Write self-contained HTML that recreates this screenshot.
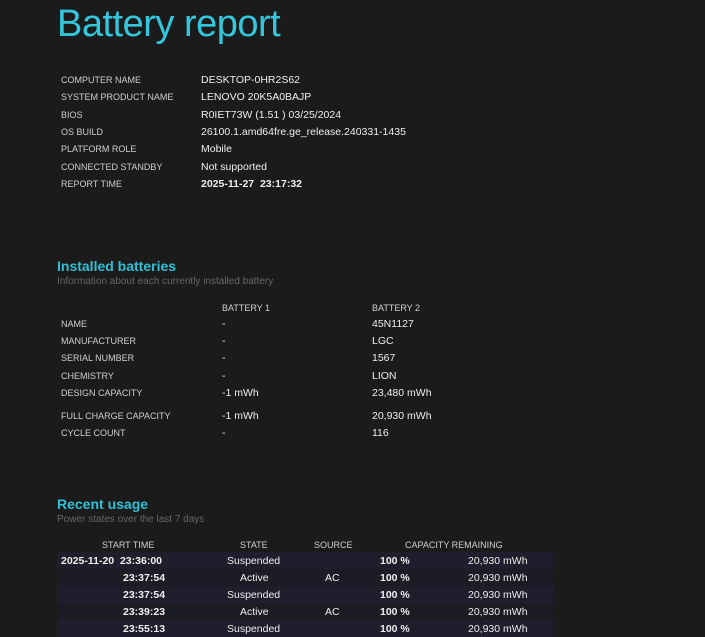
<!DOCTYPE html>
<html><head><style>
body{margin:0;background:#1b1b1b;width:705px;height:636px;overflow:hidden;font-family:"Liberation Sans",sans-serif;color:#e6e6e6;position:relative}
.a{position:absolute;white-space:nowrap;margin-top:2px}
.t{font-size:38px;color:#33c6dc;left:57px;top:-2px;letter-spacing:-0.5px;margin-top:5px}
.l{font-size:9px;color:#cfcfcf;left:61px}
.v{font-size:10.5px;color:#eee}
.h{font-size:14px;font-weight:bold;color:#2fc0d6;left:57px}
.s{font-size:10px;color:#666;left:57px}
.ch{font-size:9px;color:#cfcfcf}
.row{position:absolute;left:57px;width:496px;height:17px;margin-top:1px}
</style></head><body>
<div class="a t">Battery report</div>

<div class="a l" style="top:73px">COMPUTER NAME</div><div class="a v" style="left:201px;top:72px">DESKTOP-0HR2S62</div>
<div class="a l" style="top:90px">SYSTEM PRODUCT NAME</div><div class="a v" style="left:201px;top:89px">LENOVO 20K5A0BAJP</div>
<div class="a l" style="top:108px">BIOS</div><div class="a v" style="left:201px;top:107px">R0IET73W (1.51 ) 03/25/2024</div>
<div class="a l" style="top:125px">OS BUILD</div><div class="a v" style="left:201px;top:124px">26100.1.amd64fre.ge_release.240331-1435</div>
<div class="a l" style="top:142px">PLATFORM ROLE</div><div class="a v" style="left:201px;top:141px">Mobile</div>
<div class="a l" style="top:160px">CONNECTED STANDBY</div><div class="a v" style="left:201px;top:159px">Not supported</div>
<div class="a l" style="top:177px">REPORT TIME</div><div class="a v" style="left:201px;top:176px;font-weight:bold">2025-11-27&nbsp; 23:17:32</div>

<div class="a h" style="top:256px">Installed batteries</div>
<div class="a s" style="top:274px">Information about each currently installed battery</div>
<div class="a ch" style="left:222px;top:301px">BATTERY 1</div><div class="a ch" style="left:372px;top:301px">BATTERY 2</div>
<div class="a l" style="top:317px">NAME</div><div class="a v" style="left:222px;top:316px">-</div><div class="a v" style="left:372px;top:316px">45N1127</div>
<div class="a l" style="top:334px">MANUFACTURER</div><div class="a v" style="left:222px;top:333px">-</div><div class="a v" style="left:372px;top:333px">LGC</div>
<div class="a l" style="top:351px">SERIAL NUMBER</div><div class="a v" style="left:222px;top:350px">-</div><div class="a v" style="left:372px;top:350px">1567</div>
<div class="a l" style="top:369px">CHEMISTRY</div><div class="a v" style="left:222px;top:368px">-</div><div class="a v" style="left:372px;top:368px">LION</div>
<div class="a l" style="top:386px">DESIGN CAPACITY</div><div class="a v" style="left:222px;top:385px">-1 mWh</div><div class="a v" style="left:372px;top:385px">23,480 mWh</div>
<div class="a l" style="top:409px">FULL CHARGE CAPACITY</div><div class="a v" style="left:222px;top:408px">-1 mWh</div><div class="a v" style="left:372px;top:408px">20,930 mWh</div>
<div class="a l" style="top:426px">CYCLE COUNT</div><div class="a v" style="left:222px;top:425px">-</div><div class="a v" style="left:372px;top:425px">116</div>

<div class="a h" style="top:494px">Recent usage</div>
<div class="a s" style="top:512px">Power states over the last 7 days</div>
<div class="a ch" style="left:102px;top:538px">START TIME</div>
<div class="a ch" style="left:240px;top:538px">STATE</div>
<div class="a ch" style="left:314px;top:538px">SOURCE</div>
<div class="a ch" style="left:405px;top:538px">CAPACITY REMAINING</div>

<div class="row" style="top:551px;background:#1e1e2c"></div>
<div class="row" style="top:568px;background:#1c1c24"></div>
<div class="row" style="top:585px;background:#1e1e2c"></div>
<div class="row" style="top:602px;background:#1c1c24"></div>
<div class="row" style="top:619px;background:#1e1e2c"></div>

<div class="a v" style="left:61px;top:553px;font-weight:bold">2025-11-20&nbsp; 23:36:00</div>
<div class="a v" style="left:123px;top:570px;font-weight:bold">23:37:54</div>
<div class="a v" style="left:123px;top:587px;font-weight:bold">23:37:54</div>
<div class="a v" style="left:123px;top:604px;font-weight:bold">23:39:23</div>
<div class="a v" style="left:123px;top:621px;font-weight:bold">23:55:13</div>

<div class="a v" style="left:227px;top:553px">Suspended</div>
<div class="a v" style="left:240px;top:570px">Active</div>
<div class="a v" style="left:227px;top:587px">Suspended</div>
<div class="a v" style="left:240px;top:604px">Active</div>
<div class="a v" style="left:227px;top:621px">Suspended</div>

<div class="a v" style="left:325px;top:570px">AC</div>
<div class="a v" style="left:325px;top:604px">AC</div>

<div class="a v" style="left:380px;top:553px;font-weight:bold">100 %</div>
<div class="a v" style="left:380px;top:570px;font-weight:bold">100 %</div>
<div class="a v" style="left:380px;top:587px;font-weight:bold">100 %</div>
<div class="a v" style="left:380px;top:604px;font-weight:bold">100 %</div>
<div class="a v" style="left:380px;top:621px;font-weight:bold">100 %</div>

<div class="a v" style="left:468px;top:553px">20,930 mWh</div>
<div class="a v" style="left:468px;top:570px">20,930 mWh</div>
<div class="a v" style="left:468px;top:587px">20,930 mWh</div>
<div class="a v" style="left:468px;top:604px">20,930 mWh</div>
<div class="a v" style="left:468px;top:621px">20,930 mWh</div>
</body></html>
